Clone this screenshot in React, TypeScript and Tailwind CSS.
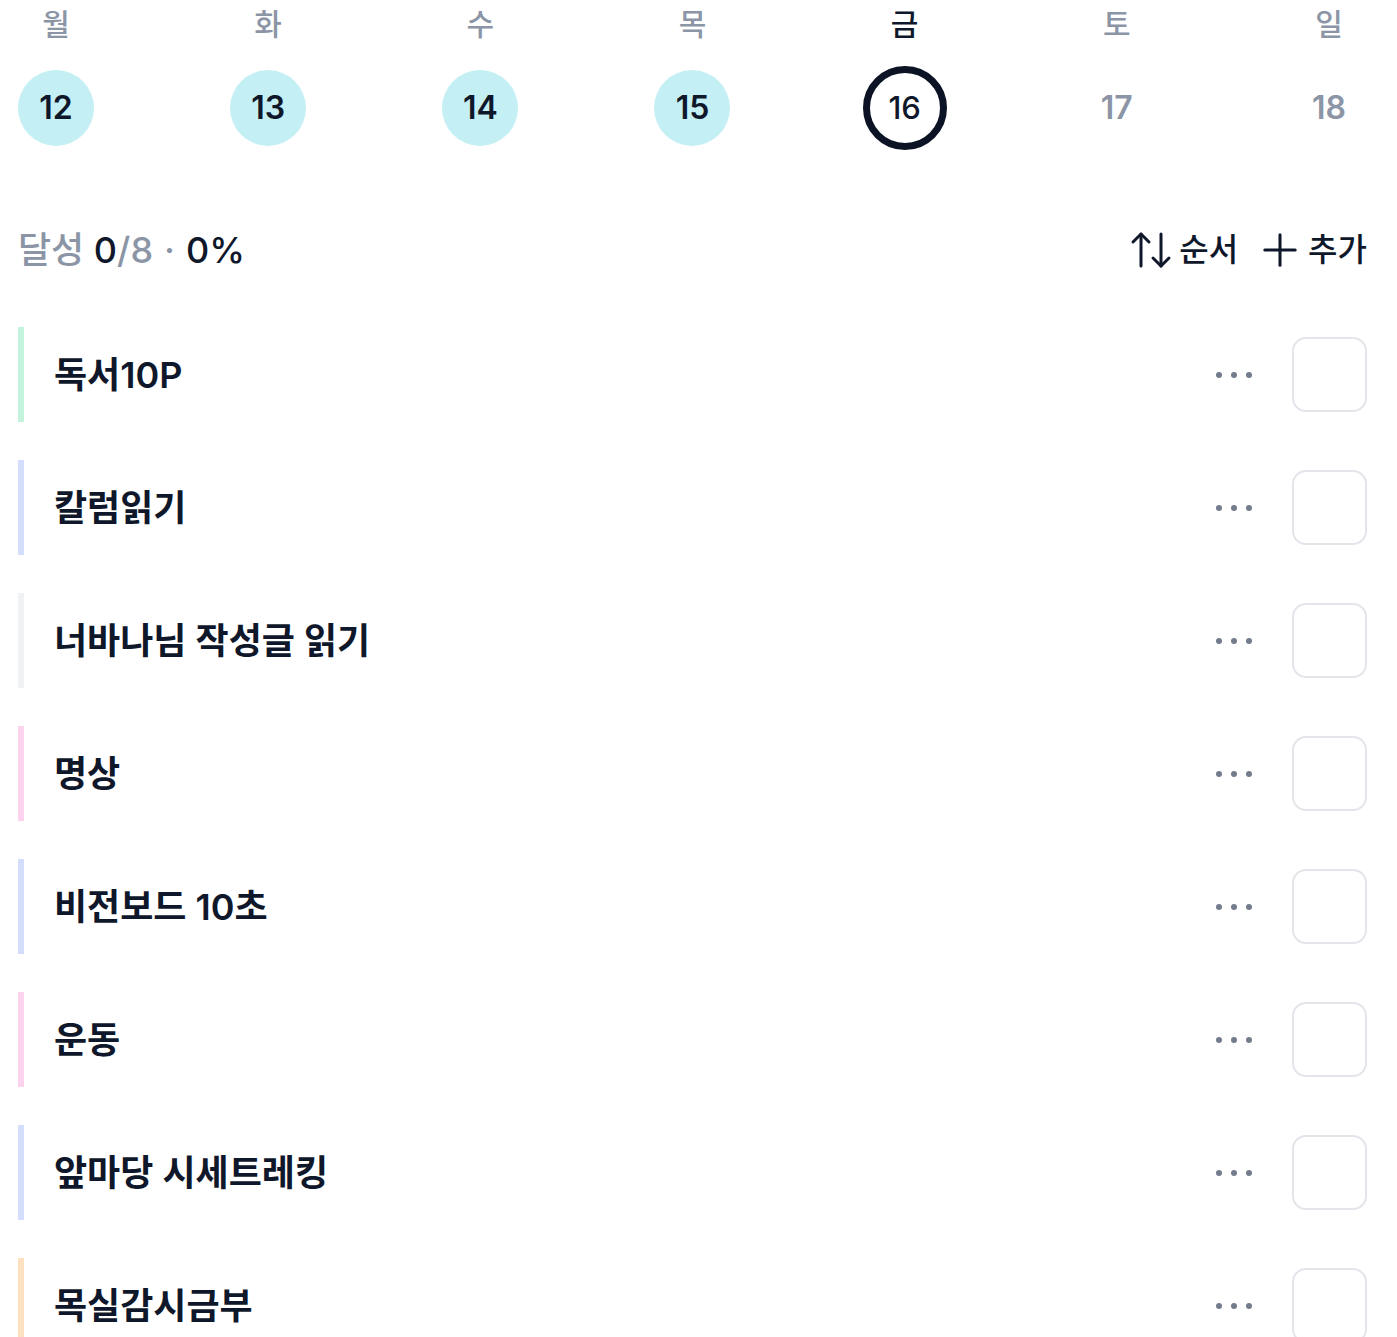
import React from 'react';
import { ArrowUpDown, Plus } from 'lucide-react';

const DAYS = [
  { label: '월', date: 12, state: 'done' },
  { label: '화', date: 13, state: 'done' },
  { label: '수', date: 14, state: 'done' },
  { label: '목', date: 15, state: 'done' },
  { label: '금', date: 16, state: 'today' },
  { label: '토', date: 17, state: 'future' },
  { label: '일', date: 18, state: 'future' },
];

const HABITS = [
  { id: 1, title: '독서10P', bar: 'bg-[#c3f3dc]' },
  { id: 2, title: '칼럼읽기', bar: 'bg-[#d5ddfc]' },
  { id: 3, title: '너바나님 작성글 읽기', bar: 'bg-[#f1f2f4]' },
  { id: 4, title: '명상', bar: 'bg-[#fcd3ec]' },
  { id: 5, title: '비전보드 10초', bar: 'bg-[#d5ddfc]' },
  { id: 6, title: '운동', bar: 'bg-[#fcd3ec]' },
  { id: 7, title: '앞마당 시세트레킹', bar: 'bg-[#d5ddfc]' },
  { id: 8, title: '목실감시금부', bar: 'bg-[#fee1c0]' },
];

const App: React.FC = () => {
  return (
    <div className="min-h-screen bg-white pl-[18px] pr-[30px] text-[#0f172a] font-['Inter','Noto_Sans_CJK_KR',sans-serif]">
      {/* Week strip */}
      <div className="flex justify-between">
        {DAYS.map((d) => (
          <div key={d.date} className="flex w-[76px] flex-col items-center">
            <span
              className={`text-[30px] leading-[48px] font-medium ${
                d.state === 'today' ? 'text-[#0f172a]' : 'text-[#8b95a6]'
              }`}
            >
              {d.label}
            </span>
            {d.state === 'today' ? (
              <div className="mt-[18px] -mb-[4px] flex h-[84px] w-[84px] items-center justify-center rounded-full border-[7px] border-[#0b1324] text-[31px] font-medium">
                {d.date}
              </div>
            ) : (
              <div
                className={`mt-[22px] flex h-[76px] w-[76px] items-center justify-center rounded-full text-[32px] font-semibold ${
                  d.state === 'done' ? 'bg-[#c4f0f5]' : 'text-[#8b95a6]'
                }`}
              >
                {d.date}
              </div>
            )}
          </div>
        ))}
      </div>

      {/* Summary + actions */}
      <div className="mt-[74px] flex h-[60px] items-center justify-between">
        <div className="text-[36px] font-medium">
          <span className="text-[#8b95a6]">달성 </span>
          <span>0</span>
          <span className="text-[#8b95a6]">/8</span>
          <span className="mx-[11px] text-[#8b95a6]">·</span>
          <span>0%</span>
        </div>
        <div className="flex items-center text-[32px] font-medium">
          <button className="flex items-center gap-[4px]">
            <ArrowUpDown size={48} strokeWidth={1.5} />
            <span>순서</span>
          </button>
          <button className="ml-[16px] flex items-center gap-[2px]">
            <Plus size={52} strokeWidth={1.4} />
            <span>추가</span>
          </button>
        </div>
      </div>

      {/* Habit list */}
      <div className="mt-[47px] flex flex-col gap-[38px]">
        {HABITS.map((h) => (
          <div key={h.id} className="flex h-[95px] items-center">
            <div className={`h-full w-[6px] ${h.bar}`} />
            <span className="ml-[30px] flex-1 text-[36px] font-semibold">{h.title}</span>
            <div className="flex items-center gap-[9px]">
              <span className="h-[6px] w-[6px] rounded-full bg-[#737c8d]" />
              <span className="h-[6px] w-[6px] rounded-full bg-[#737c8d]" />
              <span className="h-[6px] w-[6px] rounded-full bg-[#737c8d]" />
            </div>
            <button className="ml-[40px] h-[75px] w-[75px] rounded-[14px] border-2 border-[#e3e5ea] bg-white" />
          </div>
        ))}
      </div>
    </div>
  );
};

export default App;
